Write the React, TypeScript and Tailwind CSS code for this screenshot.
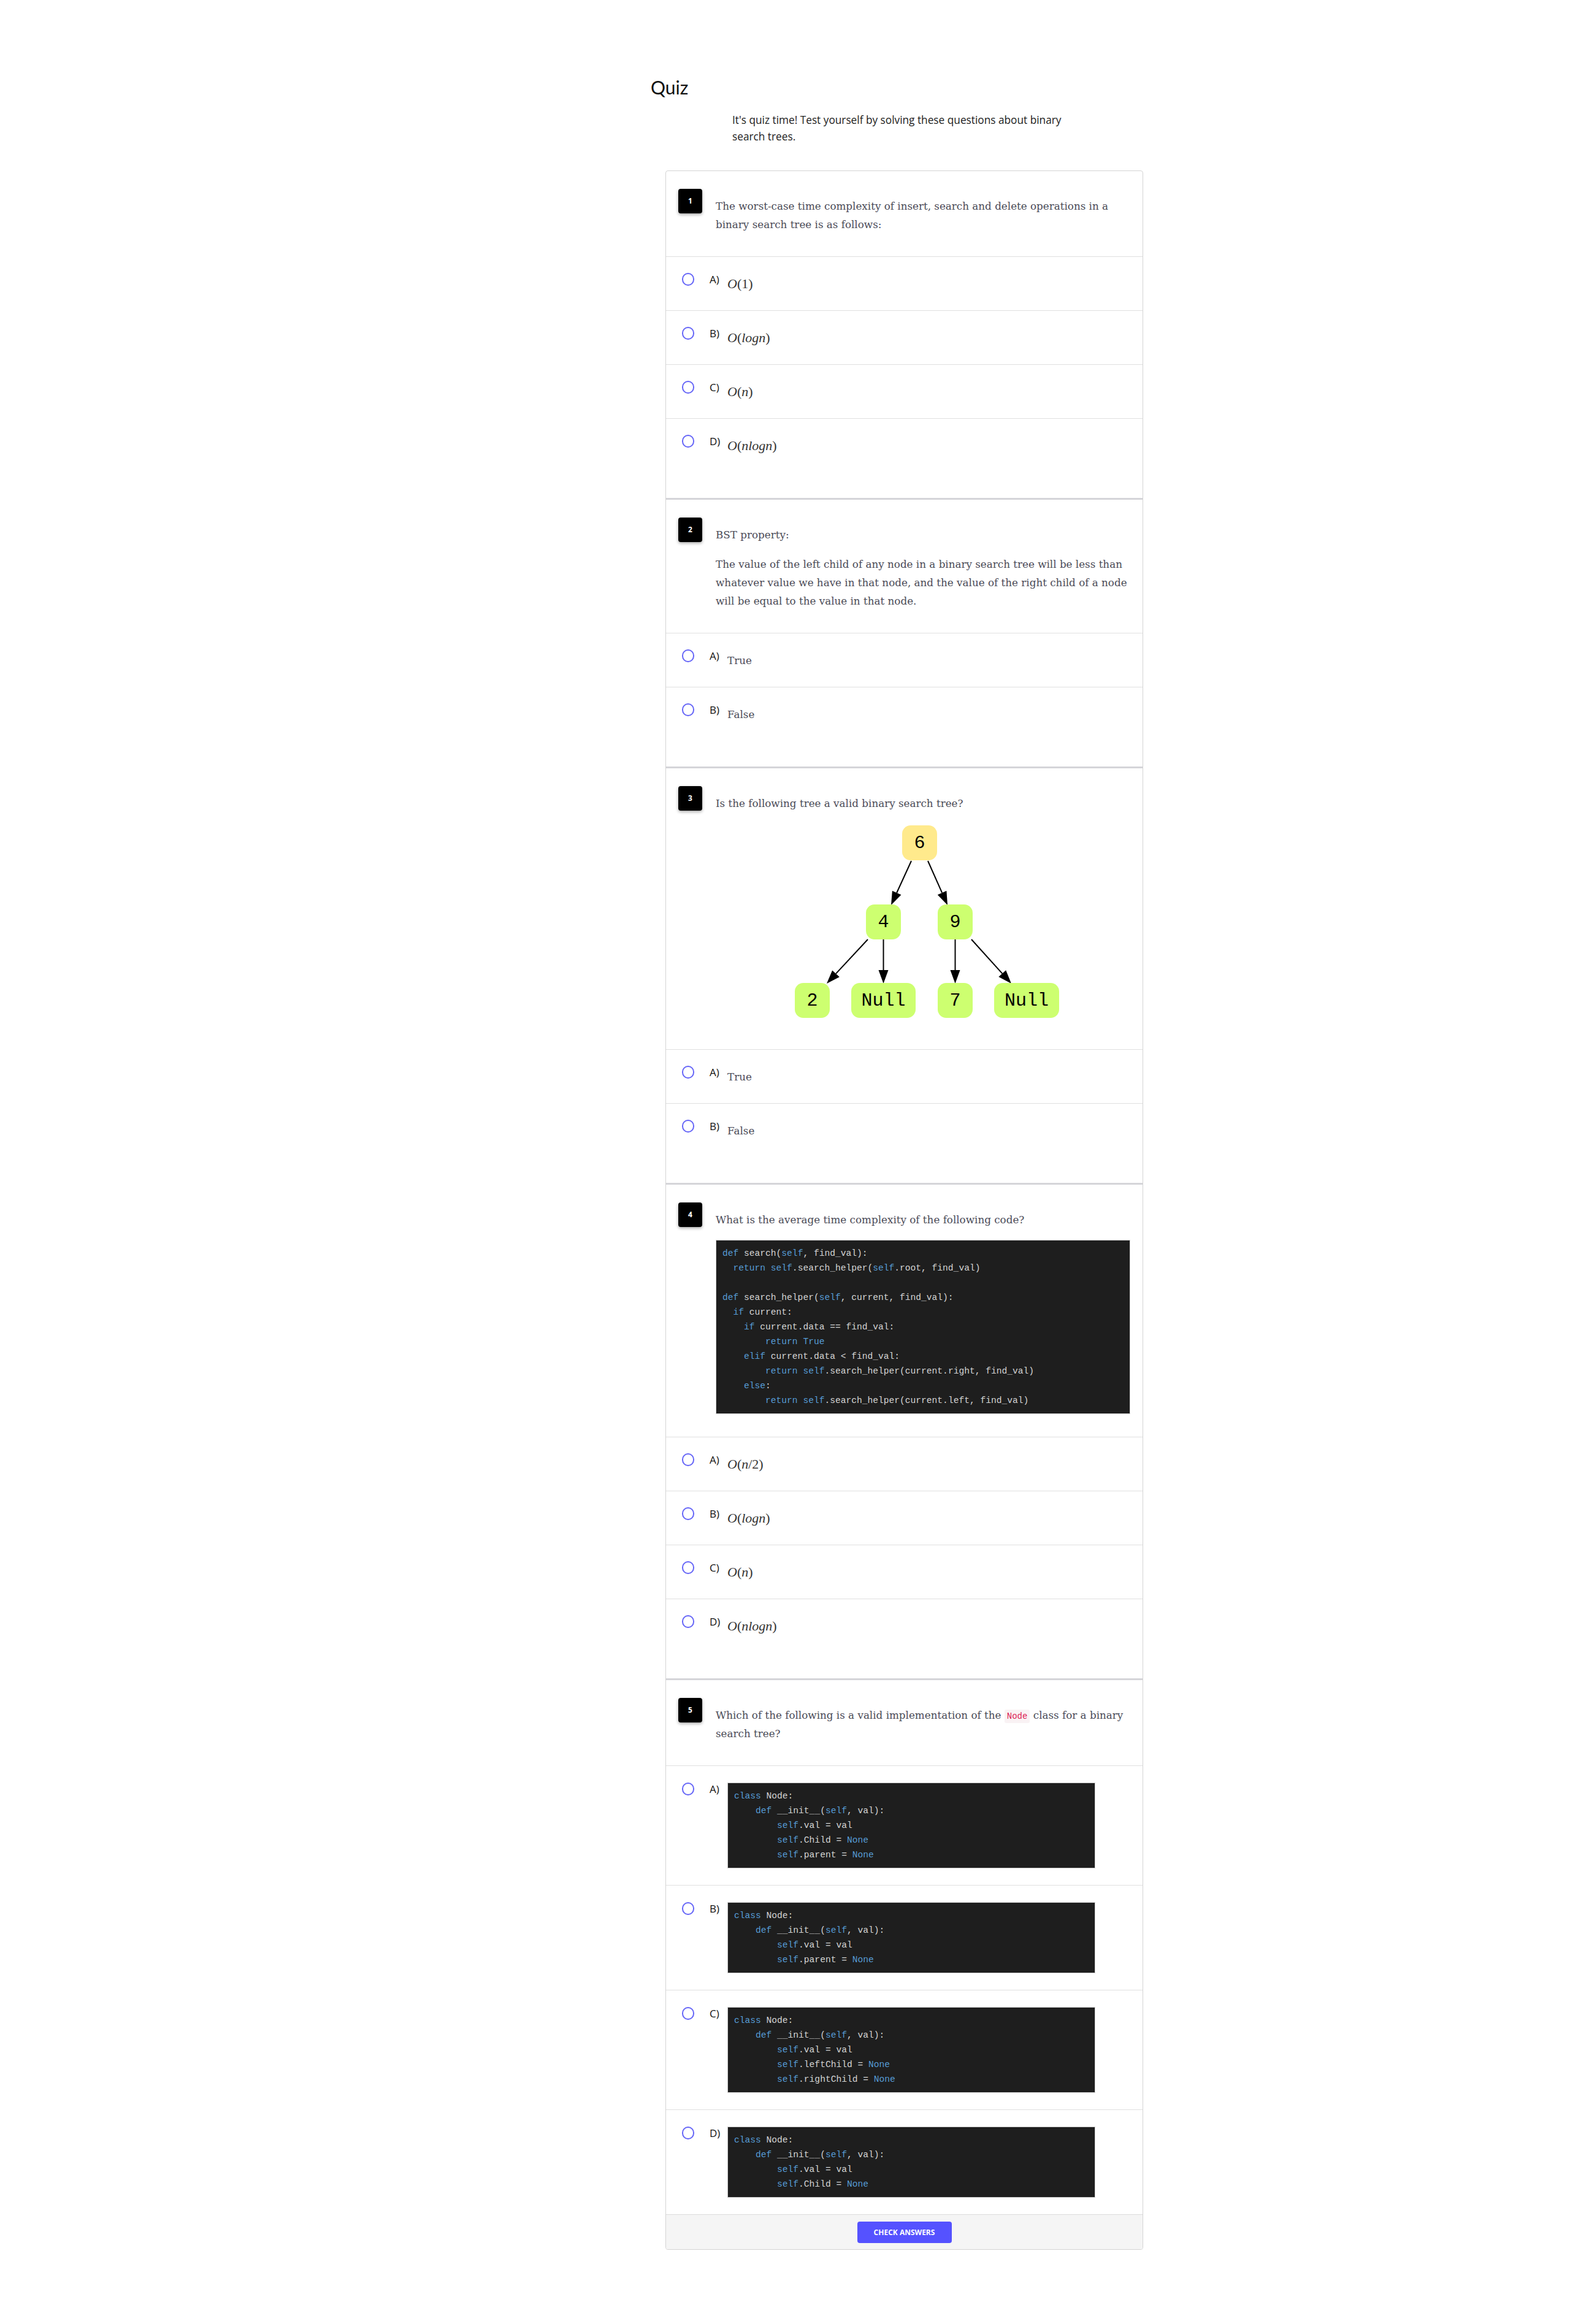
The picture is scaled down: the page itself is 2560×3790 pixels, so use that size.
import React from "react";

const SERIF = "font-['DejaVu_Serif',serif]";
const MATH = "font-['Liberation_Serif',serif]";
const SANS = "font-['Lato',sans-serif]";
const BODY = "font-['Open_Sans',sans-serif]";
const MONO = "font-['Liberation_Mono',monospace]";

const KW = new Set(["def", "return", "if", "elif", "else", "class", "self", "True", "None"]);

function Code({ code, className = "" }: { code: string; className?: string }) {
  return (
    <div
      className={`bg-[#1e1e1e] border border-[#cfcfcf] py-[9px] px-[10px] text-[14.6px] leading-[24px] text-[#d4d4d4] ${MONO} ${className}`}
    >
      {code.split("\n").map((line, i) => (
        <div key={i} className="h-[24px] whitespace-pre">
          {line.split(/(\w+)/).map((t, j) =>
            KW.has(t) ? (
              <span key={j} className="text-[#569cd6]">
                {t}
              </span>
            ) : (
              t
            )
          )}
        </div>
      ))}
    </div>
  );
}

function Badge({ n }: { n: number }) {
  return (
    <div
      className={`w-[39px] h-[40px] shrink-0 rounded-[4px] bg-black text-white text-[12px] font-bold flex items-center justify-center shadow-[0_2px_5px_rgba(0,0,0,0.35)] ${BODY}`}
    >
      {n}
    </div>
  );
}

function Question({ n, first, children }: { n: number; first?: boolean; children: React.ReactNode }) {
  return (
    <div
      className={`flex pl-[20px] pr-[20px] pt-[29px] pb-[37px] border-b border-[#e0e0e0] ${
        first ? "" : "border-t-[3px] border-t-[#d5d5d9]"
      }`}
    >
      <Badge n={n} />
      <div className={`ml-[22px] mt-[13px] flex-1 text-[16.75px] leading-[30px] text-[#4b4b57] ${SERIF}`}>
        {children}
      </div>
    </div>
  );
}

function Option({
  letter,
  last,
  code,
  math,
  children,
}: {
  letter: string;
  last?: boolean;
  code?: boolean;
  math?: boolean;
  children: React.ReactNode;
}) {
  const pad = code
    ? last
      ? "pt-[27px] pb-[27px]"
      : "pt-[27px] pb-[27px] border-b border-[#e0e0e0]"
    : last
    ? "pt-[26px] pb-[70px]"
    : "pt-[26px] pb-[28px] border-b border-[#e0e0e0]";
  return (
    <div className={`flex items-start pl-[26px] pr-[20px] ${pad}`}>
      <span className="w-[20px] h-[21px] shrink-0 rounded-full border-2 border-[#6666f7]" />
      <span className={`ml-[25px] w-[29px] h-[22px] shrink-0 text-[17px] leading-[22px] text-[#111] ${BODY}`}>
        {letter})
      </span>
      {code ? (
        children
      ) : math ? (
        <div className={`mt-[3px] h-[30px] leading-[30px] text-[22px] text-[#333] whitespace-nowrap ${MATH}`}>
          {children}
        </div>
      ) : (
        <div className={`mt-[3px] h-[30px] leading-[30px] text-[16.75px] text-[#4b4b57] ${SERIF}`}>
          {children}
        </div>
      )}
    </div>
  );
}

function Arrow({ x1, y1, x2, y2 }: { x1: number; y1: number; x2: number; y2: number }) {
  const dx = x2 - x1;
  const dy = y2 - y1;
  const len = Math.hypot(dx, dy);
  const ux = dx / len;
  const uy = dy / len;
  const bx = x2 - ux * 22;
  const by = y2 - uy * 22;
  const px = -uy * 8;
  const py = ux * 8;
  return (
    <g>
      <line x1={x1} y1={y1} x2={bx} y2={by} stroke="#000" strokeWidth="2" />
      <polygon points={`${x2},${y2} ${bx + px},${by + py} ${bx - px},${by - py}`} fill="#000" />
    </g>
  );
}

function Node({ cx, y, w, label, fill }: { cx: number; y: number; w: number; label: string; fill: string }) {
  return (
    <g>
      <rect x={cx - w / 2} y={y} width={w} height={57} rx={14} fill={fill} />
      <text
        x={cx}
        y={y + 29}
        textAnchor="middle"
        dominantBaseline="central"
        fontFamily="'Liberation Mono', monospace"
        fontSize="30"
        fill="#000"
      >
        {label}
      </text>
    </g>
  );
}

function Tree() {
  const green = "#cdff70";
  return (
    <svg width="450" height="335" viewBox="0 0 450 335" className="block">
      <Arrow x1={206} y1={65} x2={173} y2={137} />
      <Arrow x1={233} y1={65} x2={265} y2={137} />
      <Arrow x1={135} y1={193} x2={68} y2={265} />
      <Arrow x1={160.5} y1={193} x2={160.5} y2={265} />
      <Arrow x1={277.5} y1={193} x2={277.5} y2={265} />
      <Arrow x1={304} y1={193} x2={369} y2={265} />
      <Node cx={219.5} y={7} w={57} label="6" fill="#ffea8c" />
      <Node cx={160.5} y={136} w={57} label="4" fill={green} />
      <Node cx={277.5} y={136} w={57} label="9" fill={green} />
      <Node cx={44.5} y={264} w={57} label="2" fill={green} />
      <Node cx={160.5} y={264} w={105} label="Null" fill={green} />
      <Node cx={277.5} y={264} w={57} label="7" fill={green} />
      <Node cx={394} y={264} w={106} label="Null" fill={green} />
    </svg>
  );
}

const searchCode = `def search(self, find_val):
  return self.search_helper(self.root, find_val)

def search_helper(self, current, find_val):
  if current:
    if current.data == find_val:
        return True
    elif current.data < find_val:
        return self.search_helper(current.right, find_val)
    else:
        return self.search_helper(current.left, find_val)`;

const nodeA = `class Node:
    def __init__(self, val):
        self.val = val
        self.Child = None
        self.parent = None`;

const nodeB = `class Node:
    def __init__(self, val):
        self.val = val
        self.parent = None`;

const nodeC = `class Node:
    def __init__(self, val):
        self.val = val
        self.leftChild = None
        self.rightChild = None`;

const nodeD = `class Node:
    def __init__(self, val):
        self.val = val
        self.Child = None`;

export default function App() {
  return (
    <div className="min-h-[3790px] bg-white">
      <div className="ml-[1061px] w-[803px] pt-[124px]">
        <h1 className={`text-[30px] leading-[36px] text-[#111] ${SANS}`}>Quiz</h1>
        <p className={`ml-[133px] mt-[22px] w-[560px] text-[17.25px] leading-[27px] text-[#222] ${BODY}`}>
          It's quiz time! Test yourself by solving these questions about binary search trees.
        </p>

        <div className="ml-[24px] mt-[42px] w-[779px] border border-[#d4d4d4] rounded-[4px] overflow-hidden">
          {/* Question 1 */}
          <Question n={1} first>
            The worst-case time complexity of insert, search and delete operations in a binary search tree is as
            follows:
          </Question>
          <Option letter="A" math>
            <i>O</i>(1)
          </Option>
          <Option letter="B" math>
            <i>O</i>(<i>logn</i>)
          </Option>
          <Option letter="C" math>
            <i>O</i>(<i>n</i>)
          </Option>
          <Option letter="D" math last>
            <i>O</i>(<i>nlogn</i>)
          </Option>

          {/* Question 2 */}
          <Question n={2}>
            <p>BST property:</p>
            <p className="mt-[18px]">
              The value of the left child of any node in a binary search tree will be less than whatever value we
              have in that node, and the value of the right child of a node will be equal to the value in that node.
            </p>
          </Question>
          <Option letter="A">True</Option>
          <Option letter="B" last>
            False
          </Option>

          {/* Question 3 */}
          <Question n={3}>
            <p>Is the following tree a valid binary search tree?</p>
            <div className="mt-[14px] flex justify-center">
              <Tree />
            </div>
          </Question>
          <Option letter="A">True</Option>
          <Option letter="B" last>
            False
          </Option>

          {/* Question 4 */}
          <Question n={4}>
            <p>What is the average time complexity of the following code?</p>
            <Code code={searchCode} className="mt-[18px]" />
          </Question>
          <Option letter="A" math>
            <i>O</i>(<i>n</i>/2)
          </Option>
          <Option letter="B" math>
            <i>O</i>(<i>logn</i>)
          </Option>
          <Option letter="C" math>
            <i>O</i>(<i>n</i>)
          </Option>
          <Option letter="D" math last>
            <i>O</i>(<i>nlogn</i>)
          </Option>

          {/* Question 5 */}
          <Question n={5}>
            <p>
              <span>Which of the following is a valid implementation of the </span>
              <code
                className={`inline-block leading-[22px] bg-[#f9f2f4] text-[#dd2255] text-[14px] px-[4px] rounded-[3px] ${MONO}`}
              >
                Node
              </code>
              <span> class for a binary </span>
              <span>search tree?</span>
            </p>
          </Question>
          <Option letter="A" code>
            <Code code={nodeA} className="w-[600px]" />
          </Option>
          <Option letter="B" code>
            <Code code={nodeB} className="w-[600px]" />
          </Option>
          <Option letter="C" code>
            <Code code={nodeC} className="w-[600px]" />
          </Option>
          <Option letter="D" code last>
            <Code code={nodeD} className="w-[600px]" />
          </Option>

          <div className="bg-[#f5f5f5] border-t border-[#dcdcdc] pt-[11px] pb-[10px] flex justify-center">
            <button
              className={`w-[154px] h-[35px] rounded-[4px] bg-[#5552ff] text-white text-[12px] font-bold uppercase ${BODY}`}
            >
              Check Answers
            </button>
          </div>
        </div>
      </div>
    </div>
  );
}
